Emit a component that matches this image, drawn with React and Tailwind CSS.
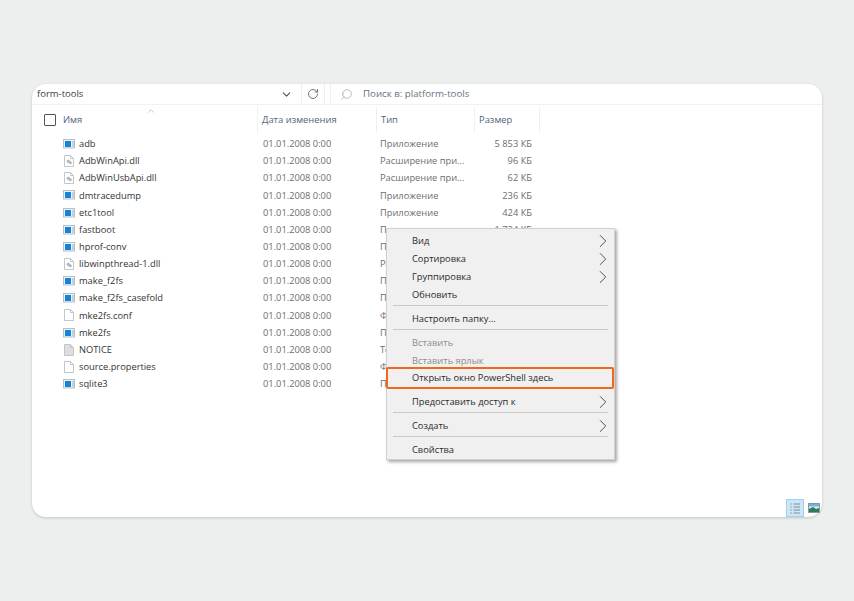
import { ChevronDown, ChevronRight, ChevronUp, RotateCw, Search } from "lucide-react";

const FILES = [
  { name: "adb", kind: "exe", type: "Приложение", size: "5 853 КБ" },
  { name: "AdbWinApi.dll", kind: "dll", type: "Расширение при...", size: "96 КБ" },
  { name: "AdbWinUsbApi.dll", kind: "dll", type: "Расширение при...", size: "62 КБ" },
  { name: "dmtracedump", kind: "exe", type: "Приложение", size: "236 КБ" },
  { name: "etc1tool", kind: "exe", type: "Приложение", size: "424 КБ" },
  { name: "fastboot", kind: "exe", type: "Приложение", size: "1 724 КБ" },
  { name: "hprof-conv", kind: "exe", type: "Приложение", size: "" },
  { name: "libwinpthread-1.dll", kind: "dll", type: "Расширение", size: "" },
  { name: "make_f2fs", kind: "exe", type: "Приложение", size: "" },
  { name: "make_f2fs_casefold", kind: "exe", type: "Приложение", size: "" },
  { name: "mke2fs.conf", kind: "file", type: "Файл", size: "" },
  { name: "mke2fs", kind: "exe", type: "Приложение", size: "" },
  { name: "NOTICE", kind: "text", type: "Текст", size: "" },
  { name: "source.properties", kind: "file", type: "Файл", size: "" },
  { name: "sqlite3", kind: "exe", type: "Приложение", size: "" },
];

function FileIcon({ kind }) {
  if (kind === "exe") {
    return (
      <svg width="12" height="12" viewBox="0 0 12 12" className="shrink-0">
        <rect x="0.5" y="1.5" width="11" height="8.5" fill="#eef2f5" stroke="#b4c0c9" />
        <rect x="2" y="3" width="6" height="6" fill="#1283d8" />
        <path d="M9 4h2M9 6h2M9 8h2" stroke="#a3aeb6" strokeWidth="1" />
      </svg>
    );
  }
  const fill = kind === "text" ? "#dedede" : "#ffffff";
  return (
    <svg width="10" height="12" viewBox="0 0 10 12" className="shrink-0 mx-px">
      <path d="M0.5 0.5H6.5L9.5 3.5V11.5H0.5Z" fill={fill} stroke="#c3c7cb" />
      <path d="M6.5 0.5V3.5H9.5" fill="none" stroke="#c3c7cb" />
      {kind === "dll" && <path d="M2 6L4.5 4.5L8 7.5L7 9.5L4 8Z" fill="#b0b6bb" />}
    </svg>
  );
}

function HeaderCell({ label, className }) {
  return <div className={`h-[26px] flex items-center border-r border-[#eef0f2] pl-[4px] text-[#52647a] ${className}`}>{label}</div>;
}

function MenuItem({ label, arrow, disabled }) {
  return (
    <div className={`h-[18px] flex items-center justify-between pl-[25px] ${disabled ? "text-[#8c8c8c]" : "text-[#2a2a2a]"}`}>
      <span>{label}</span>
      {arrow && <ChevronRight size={22} strokeWidth={1} className="-my-[2px] text-[#444]" />}
    </div>
  );
}

const Sep = () => <div className="h-px mt-px mb-[4px] bg-[#c9c9c9] mx-[6px]" />;

export default function App() {
  return (
    <div className="w-[854px] h-[601px] overflow-hidden bg-[#edefee] pt-[84px] font-['Open_Sans','Noto_Sans',sans-serif] text-[9.3px]">
      <div className="relative mx-[32px] w-[790px] h-[433px] rounded-[14px] bg-white shadow-[0_1px_3px_rgba(0,0,0,0.18)] flex flex-col">
        {/* address + search */}
        <div className="h-[21px] flex items-center border-b border-[#f0f1f2] text-[#3c3c3c] text-[9.5px]">
          <div className="w-[269px] h-full flex items-center justify-between pl-[5px] pr-[8px]">
            <span>form-tools</span>
            <ChevronDown size={13} strokeWidth={2} className="text-[#555]" />
          </div>
          <div className="w-[24px] h-full flex items-center justify-center border-x border-[#eef0f2]">
            <RotateCw size={12} strokeWidth={1.6} className="text-[#555]" />
          </div>
          <div className="ml-[5px] flex-1 h-full flex items-center gap-[10px] border-l border-[#eef0f2] pl-[9px] text-[#66727e] text-[9.7px]">
            <Search size={13} strokeWidth={1} className="-scale-x-100 text-[#7d8790]" />
            <span>Поиск в: platform-tools</span>
          </div>
        </div>

        {/* column headers */}
        <div className="relative mt-[2px] h-[26px] flex items-center text-[9.4px]">
          <div className="w-[12px] h-[12px] ml-[12px] border border-[#555] rounded-[1px]" />
          <HeaderCell label="Имя" className="w-[199px] ml-[3px]" />
          <HeaderCell label="Дата изменения" className="w-[119px]" />
          <HeaderCell label="Тип" className="w-[98px]" />
          <HeaderCell label="Размер" className="w-[65px]" />
          <ChevronUp size={10} strokeWidth={1.2} className="absolute left-[114px] -top-[1px] text-[#8a96a3]" />
        </div>

        {/* files */}
        <div className="mt-[2.5px]">
          {FILES.map((f) => (
            <div key={f.name} className="h-[17.15px] flex items-center">
              <div className="w-[225px] pl-[31px] flex items-center gap-[4px] text-[#333]">
                <FileIcon kind={f.kind} />
                <span>{f.name}</span>
              </div>
              <div className="w-[118px] pl-[6px] text-[#6d6d6d]">01.01.2008 0:00</div>
              <div className="w-[98px] pl-[5px] text-[#6d6d6d] whitespace-nowrap overflow-hidden">{f.type}</div>
              <div className="w-[59px] text-right text-[#6d6d6d]">{f.size}</div>
            </div>
          ))}
        </div>

        {/* view switch */}
        <div className="mt-auto flex items-end justify-end pr-[2px] gap-[4px]">
          <div className="w-[18px] h-[18px] bg-[#cde6f7] border border-[#9fd0ee] flex items-center justify-center">
            <svg width="12" height="12" viewBox="0 0 12 12">
              <path d="M1 2h2M1 5h2M1 8h2M1 11h2" stroke="#9aa8b2" />
              <path d="M4.5 2H11M4.5 5H11M4.5 8H11M4.5 11H11" stroke="#7e8c96" />
            </svg>
          </div>
          <svg width="12" height="10" viewBox="0 0 12 10" className="mb-[4px]">
            <rect x="0.5" y="0.5" width="11" height="9" fill="#dfe9ef" stroke="#8a97a0" />
            <path d="M1 6L5 4L8 6L11 5V9H1Z" fill="#2f7a5f" />
            <rect x="1" y="1" width="10" height="2.5" fill="#6fb4e0" />
          </svg>
        </div>

        {/* context menu */}
        <div className="absolute left-[354px] top-[144px] w-[229px] h-[232px] pt-[3px] bg-[#f0f0f0] border border-[#d0d0d0] shadow-[2px_2px_3px_rgba(0,0,0,0.35)] text-[9.3px]">
          <MenuItem label="Вид" arrow />
          <MenuItem label="Сортировка" arrow />
          <MenuItem label="Группировка" arrow />
          <MenuItem label="Обновить" />
          <Sep />
          <MenuItem label="Настроить папку..." />
          <Sep />
          <MenuItem label="Вставить" disabled />
          <MenuItem label="Вставить ярлык" disabled />
          <div className="relative h-[22px] -mt-[3px] -ml-px flex items-center pl-[24px] border-2 border-[#f4661b] rounded-[2px] text-[#2a2a2a]">
            Открыть окно PowerShell здесь
          </div>
          <div className="mt-[4px]"><MenuItem label="Предоставить доступ к" arrow /></div>
          <Sep />
          <MenuItem label="Создать" arrow />
          <Sep />
          <MenuItem label="Свойства" />
        </div>
      </div>
    </div>
  );
}
